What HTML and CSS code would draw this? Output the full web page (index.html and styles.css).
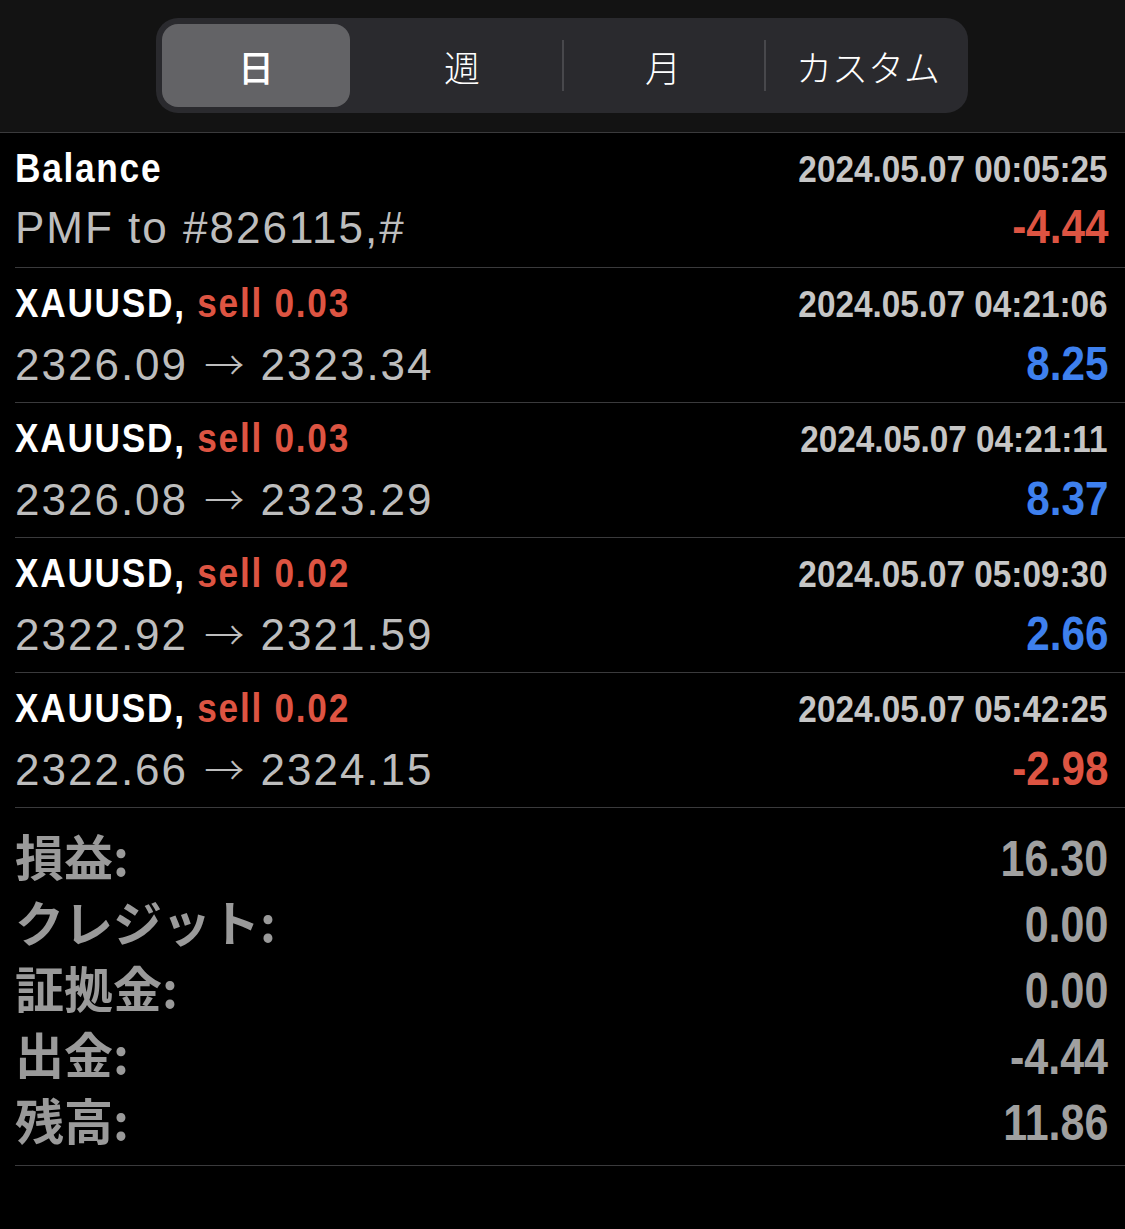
FILE: index.html
```html
<!DOCTYPE html>
<html>
<head>
  <meta charset="utf-8"/>
  <title>履歴</title>
  <link rel="stylesheet" href="styles.css">
</head>
<body>

  <!-- ---------- PERIOD SWITCH ---------- -->
  <div class="topbar">
    <div class="segments">
      <div class="seg active">日</div>
      <div class="seg">週</div>
      <div class="seg">月</div>
      <div class="seg">カスタム</div>
    </div>
  </div>

  <!-- ---------- DEALS ---------- -->
  <div class="deals">
    <div class="deal">
      <div class="line">
        <span class="title">Balance</span>
        <span class="time">2024.05.07 00:05:25</span>
      </div>
      <div class="line second">
        <span class="sub">PMF to #826115,#</span>
        <span class="amount loss">-4.44</span>
      </div>
    </div>

    <div class="deal">
      <div class="line">
        <span class="title">XAUUSD, <em class="side">sell 0.03</em></span>
        <span class="time">2024.05.07 04:21:06</span>
      </div>
      <div class="line second">
        <span class="sub">2326.09 <span class="arrow">→</span> 2323.34</span>
        <span class="amount profit">8.25</span>
      </div>
    </div>

    <div class="deal">
      <div class="line">
        <span class="title">XAUUSD, <em class="side">sell 0.03</em></span>
        <span class="time">2024.05.07 04:21:11</span>
      </div>
      <div class="line second">
        <span class="sub">2326.08 <span class="arrow">→</span> 2323.29</span>
        <span class="amount profit">8.37</span>
      </div>
    </div>

    <div class="deal">
      <div class="line">
        <span class="title">XAUUSD, <em class="side">sell 0.02</em></span>
        <span class="time">2024.05.07 05:09:30</span>
      </div>
      <div class="line second">
        <span class="sub">2322.92 <span class="arrow">→</span> 2321.59</span>
        <span class="amount profit">2.66</span>
      </div>
    </div>

    <div class="deal">
      <div class="line">
        <span class="title">XAUUSD, <em class="side">sell 0.02</em></span>
        <span class="time">2024.05.07 05:42:25</span>
      </div>
      <div class="line second">
        <span class="sub">2322.66 <span class="arrow">→</span> 2324.15</span>
        <span class="amount loss">-2.98</span>
      </div>
    </div>
  </div>

  <!-- ---------- SUMMARY ---------- -->
  <div class="summary">
    <div class="sum-row"><span class="label">損益:</span><span class="value">16.30</span></div>
    <div class="sum-row"><span class="label">クレジット:</span><span class="value">0.00</span></div>
    <div class="sum-row"><span class="label">証拠金:</span><span class="value">0.00</span></div>
    <div class="sum-row"><span class="label">出金:</span><span class="value">-4.44</span></div>
    <div class="sum-row"><span class="label">残高:</span><span class="value">11.86</span></div>
  </div>

</body>
</html>
```

FILE: styles.css
```css
/* Basic reset */
* {
  box-sizing: border-box;
  margin: 0;
  padding: 0;
}
body {
  background: #000;
  color: #fff;
  font-family: "Liberation Sans", "Noto Sans CJK JP", sans-serif;
  width: 1125px;
  min-height: 1229px;
}

/* ---------- PERIOD SWITCH ---------- */
.topbar {
  background: #131313;
  height: 133px;
  padding-top: 18px;
  border-bottom: 1px solid #3a3a3c;
}
.segments {
  display: grid;
  grid-template-columns: 200px 200px 202px 198px;
  width: 812px;
  height: 95px;
  margin-left: 156px;
  padding: 6px;
  background: #2a2a2e;
  border-radius: 22px;
}
.seg {
  display: flex;
  align-items: center;
  justify-content: center;
  position: relative;
  font-family: "Noto Sans CJK JP", sans-serif;
  font-size: 36px;
  font-weight: 300;
  color: #fff;
}
.seg:last-child {
  padding-left: 10px;
}
/* thin divider between the two last segments */
.seg:nth-child(n+3)::before {
  content: "";
  position: absolute;
  left: 0;
  top: 16px;
  bottom: 16px;
  width: 2px;
  background: #48484c;
}
.seg.active {
  background: #636366;
  border-radius: 16px;
  margin-right: 12px;
  font-weight: 500;
}

/* ---------- DEALS ---------- */
.deal {
  margin-left: 15px;
  height: 135px;
  padding: 11px 17px 0 0;
  border-bottom: 1px solid #3a3a3c;
}
.line {
  display: flex;
  justify-content: space-between;
  align-items: baseline;
}
.line.second {
  margin-top: 3px;
}

/* condensed bold look: Helvetica Condensed is not available, so squeeze Liberation Sans */
.title,
.time,
.amount,
.value {
  display: inline-block;
  font-family: "Liberation Sans", sans-serif;
  font-weight: 700;
}
.title {
  font-size: 41px;
  line-height: 48px;
  letter-spacing: 2px;
  color: #fff;
  transform: scaleX(0.86);
  transform-origin: left center;
}
.title .side {
  font-style: normal;
  color: #dd5442;
}
.time {
  font-size: 37px;
  color: #c6c6c6;
  transform: scaleX(0.9);
  transform-origin: right center;
}
.sub {
  font-size: 44px;
  line-height: 66px;
  letter-spacing: 2px;
  color: #bdbdbd;
}
.arrow {
  font-family: "Noto Sans CJK JP", sans-serif;
  font-weight: 300;
  font-size: 40px;
  letter-spacing: 0;
  margin: 0 2px;
}
.amount {
  font-size: 48px;
  transform: scaleX(0.88);
  transform-origin: right center;
}
.amount.loss {
  color: #dd5442;
}
.amount.profit {
  color: #3e80ee;
}

/* ---------- SUMMARY ---------- */
.summary {
  margin-left: 15px;
  padding: 14px 17px 13px 0;
  border-bottom: 1px solid #3a3a3c;
}
.sum-row {
  display: flex;
  justify-content: space-between;
  align-items: baseline;
  height: 66px;
}
.label {
  font-family: "Noto Sans CJK JP", sans-serif;
  font-weight: 700;
  font-size: 49px;
  line-height: 66px;
  color: #9a9a9a;
}
.value {
  font-size: 50px;
  color: #a0a0a0;
  transform: scaleX(0.86);
  transform-origin: right center;
}
```
